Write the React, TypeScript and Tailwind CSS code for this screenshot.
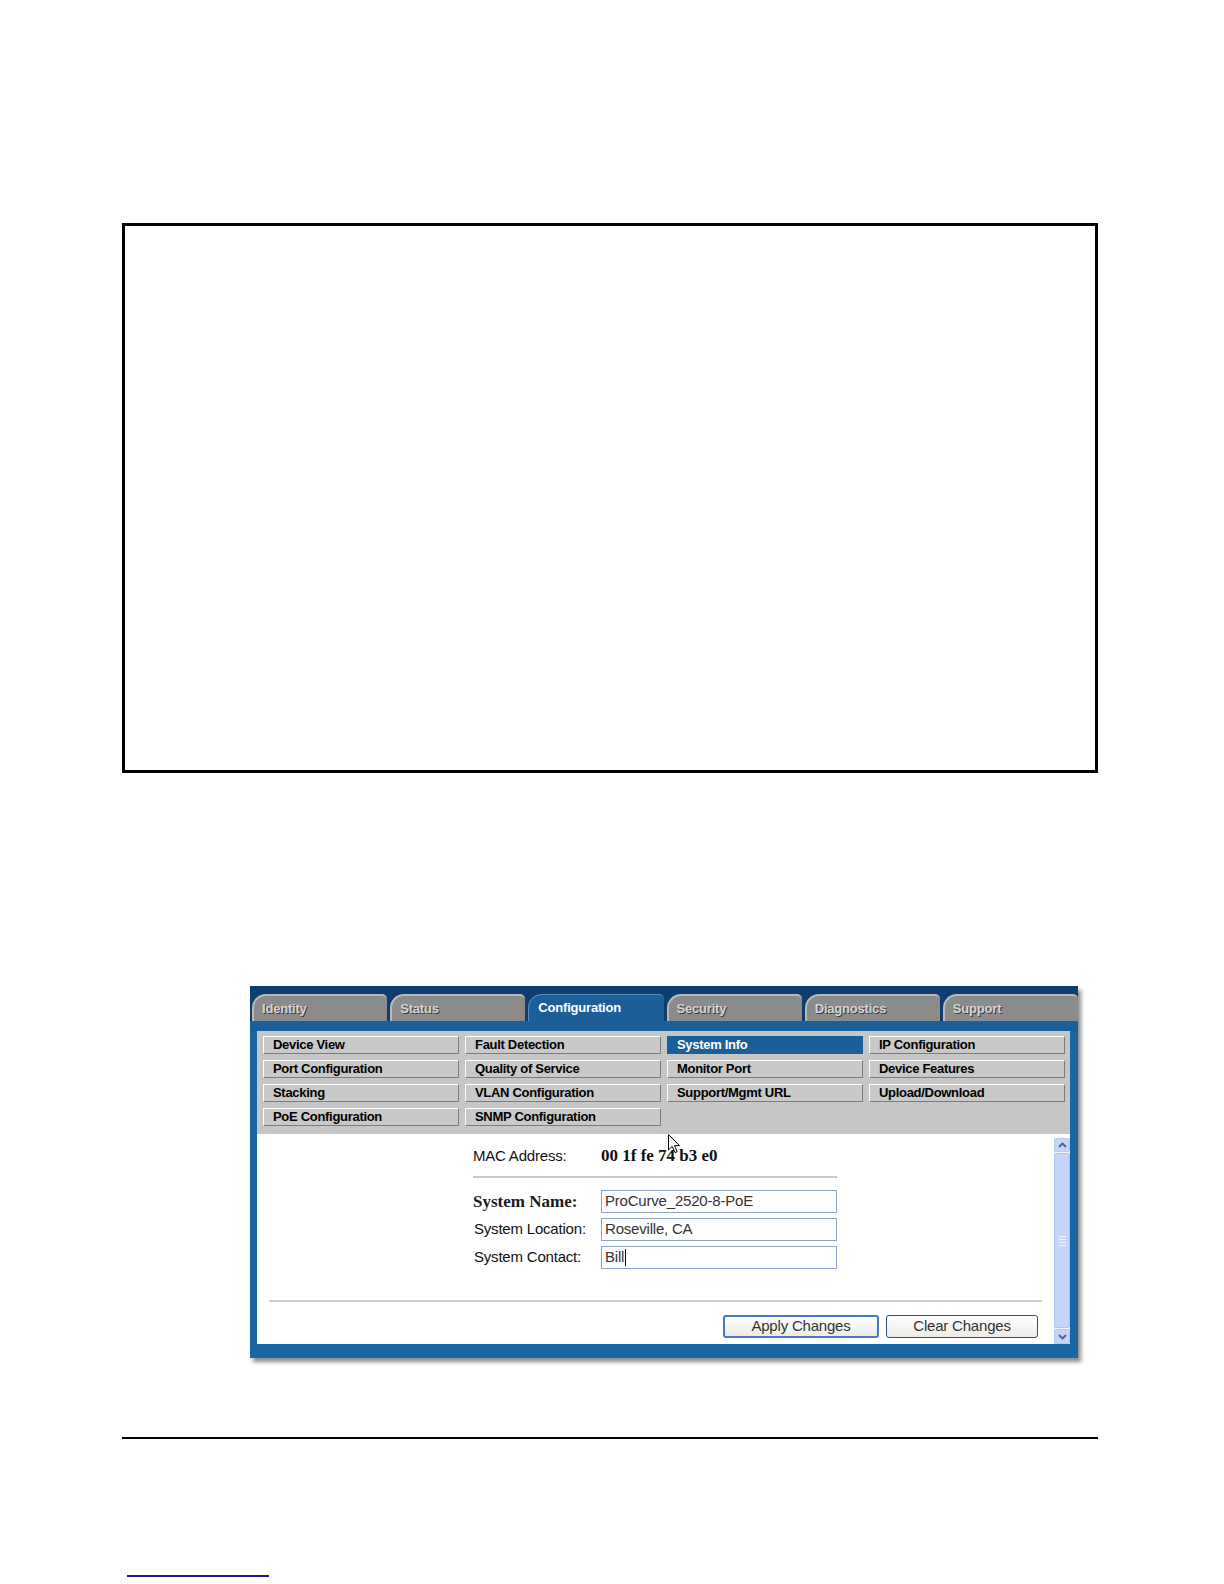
import React from "react";

const tabs = ["Identity", "Status", "Configuration", "Security", "Diagnostics", "Support"];

const menu = [
  ["Device View", "Fault Detection", "System Info", "IP Configuration"],
  ["Port Configuration", "Quality of Service", "Monitor Port", "Device Features"],
  ["Stacking", "VLAN Configuration", "Support/Mgmt URL", "Upload/Download"],
  ["PoE Configuration", "SNMP Configuration", "", ""],
];

function Tab({ label }: { label: string }) {
  const active = label === "Configuration";
  return (
    <div
      className={
        active
          ? "w-[137px] h-full rounded-tl-[14px] rounded-tr-[5px] bg-[#1c5f98] border-t border-l border-[#5a8cc0] flex items-center pl-[9px] text-[13px] tracking-[-0.2px] font-bold text-white"
          : "w-[137px] h-full rounded-tl-[14px] rounded-tr-[5px] bg-[#8b8b8b] border-t-2 border-l-2 border-[#b9b9b9] flex items-center pl-[8px] text-[13px] tracking-[-0.2px] font-bold text-[#d4d4d4] [text-shadow:1px_1px_0_#3a3a3a]"
      }
    >
      {label}
    </div>
  );
}

function MenuButton({ label }: { label: string }) {
  if (!label) return <div className="h-[18px]" />;
  const active = label === "System Info";
  return (
    <div
      className={
        active
          ? "h-[18px] bg-[#1c5e97] border border-[#1c5e97] pl-[9px] text-[13px] tracking-[-0.3px] font-bold text-white leading-[16px]"
          : "h-[18px] bg-[#c9c9c9] border border-t-white border-l-white border-b-[#7c7c7c] border-r-[#7c7c7c] pl-[9px] text-[13px] tracking-[-0.3px] font-bold text-black leading-[16px]"
      }
    >
      {label}
    </div>
  );
}

function Field({ label, value, serif, caret }: { label: string; value: string; serif?: boolean; caret?: boolean }) {
  return (
    <div className="flex items-center h-[23px]">
      <div
        className={
          serif
            ? "w-[128px] text-[17px] font-bold text-[#1a1a1a] [font-family:'Liberation_Serif',serif]"
            : "w-[128px] text-[15px] tracking-[-0.2px] text-[#111] pl-[1px]"
        }
      >
        {label}
      </div>
      <div className="w-[236px] h-[23px] border border-[#8ea3bf] bg-white flex items-center pl-[3px] text-[15px] tracking-[-0.2px] text-[#333]">
        {value}
        {caret && <span className="inline-block w-[1px] h-[17px] bg-black ml-[1px]" />}
      </div>
    </div>
  );
}

function Scrollbar() {
  return (
    <div className="w-[16px] mt-[4px] flex flex-col bg-[#f3f6fd]">
      <div className="h-[14px] rounded-[2px] bg-[#c4d4fb] border border-[#b4c6f2] flex items-center justify-center">
        <svg width="9" height="6" viewBox="0 0 9 6">
          <path d="M1 5 L4.5 1.5 L8 5" fill="none" stroke="#4d6185" strokeWidth="1.8" />
        </svg>
      </div>
      <div className="flex-1 my-[1px] rounded-[2px] bg-[#c6d5fb] border border-[#b0c3f0] flex items-center justify-center">
        <div className="flex flex-col gap-[2px]">
          <div className="w-[7px] h-[1px] bg-[#eef3ff]" />
          <div className="w-[7px] h-[1px] bg-[#eef3ff]" />
          <div className="w-[7px] h-[1px] bg-[#eef3ff]" />
          <div className="w-[7px] h-[1px] bg-[#eef3ff]" />
        </div>
      </div>
      <div className="h-[15px] rounded-[2px] bg-[#c4d4fb] border border-[#b4c6f2] flex items-center justify-center">
        <svg width="9" height="6" viewBox="0 0 9 6">
          <path d="M1 1 L4.5 4.5 L8 1" fill="none" stroke="#4d6185" strokeWidth="1.8" />
        </svg>
      </div>
    </div>
  );
}

export default function App() {
  return (
    <div className="w-[1224px] h-[1584px] bg-white [font-family:'Liberation_Sans',Arial,sans-serif]">
      <div className="pt-[223px] pl-[122px]">
        <div className="w-[976px] h-[550px] border-[3px] border-black" />
      </div>

      <div className="pl-[250px] pt-[213px]">
        <div className="relative w-[828px] h-[372px] bg-[#1966a2] flex flex-col shadow-[3px_4px_4px_rgba(0,0,0,0.45)]">
          {/* tab strip */}
          <div className="bg-[#0f3d6d] pt-[8px] pl-[2px] h-[35px]">
            <div className="flex gap-[3px] h-[27px]">
              {tabs.map((t) => (
                <Tab key={t} label={t} />
              ))}
            </div>
          </div>
          <div className="h-[10px] bg-[#1b5f98]" />

          <div className="flex-1 flex flex-col pl-[7px] pr-[8px] pb-[14px]">
            {/* sub menu */}
            <div className="bg-[#c6c6c6] pt-[5px] pb-[8px] pl-[6px] pr-[5px]">
              <div className="grid grid-cols-4 gap-x-[6px] gap-y-[6px]">
                {menu.flat().map((m, i) => (
                  <MenuButton key={i} label={m} />
                ))}
              </div>
            </div>

            {/* content */}
            <div className="flex-1 bg-white flex">
              <div className="flex-1 flex flex-col">
                <div className="pl-[216px] pt-[11px]">
                  <div className="flex items-center h-[22px]">
                    <div className="w-[128px] text-[15px] tracking-[-0.2px] text-[#111]">MAC Address:</div>
                    <div className="text-[17px] font-bold text-[#111] [font-family:'Liberation_Serif',serif]">00 1f fe 74 b3 e0</div>
                  </div>
                  <div className="mt-[9px] w-[364px] h-[2px] bg-[#c8c8c8]" />
                  <div className="mt-[12px] flex flex-col gap-[5px]">
                    <Field label="System Name:" value="ProCurve_2520-8-PoE" serif />
                    <Field label="System Location:" value="Roseville, CA" />
                    <Field label="System Contact:" value="Bill" caret />
                  </div>
                </div>
                <div className="mt-[31px] ml-[12px] w-[773px] h-[2px] bg-[#cfcfcf]" />
                <div className="mt-[13px] flex justify-end gap-[7px] pr-[16px]">
                  <div className="w-[156px] h-[23px] rounded-[3px] border-2 border-[#4a77c9] bg-[linear-gradient(#ffffff,#ecebe6)] flex items-center justify-center text-[15px] tracking-[-0.2px] text-[#333]">
                    Apply Changes
                  </div>
                  <div className="w-[152px] h-[23px] rounded-[3px] border border-[#2c4f7c] bg-[linear-gradient(#ffffff,#ecebe6)] flex items-center justify-center text-[15px] tracking-[-0.2px] text-[#333]">
                    Clear Changes
                  </div>
                </div>
              </div>
              <Scrollbar />
            </div>
          </div>

          {/* mouse pointer */}
          <svg className="absolute left-[418px] top-[148px]" width="13" height="20" viewBox="0 0 13 20">
            <path d="M0.5 0.5 L0.5 16 L4.2 12.4 L7 18.6 L9.2 17.6 L6.5 11.6 L11.5 11.6 Z" fill="white" stroke="black" strokeWidth="1" />
          </svg>
        </div>
      </div>

      <div className="pl-[122px] pt-[79px]">
        <div className="w-[976px] h-[2px] bg-black" />
      </div>
      <div className="pl-[127px] pt-[136px]">
        <div className="w-[142px] h-[2px] bg-[#1a1a8c]" />
      </div>
    </div>
  );
}
